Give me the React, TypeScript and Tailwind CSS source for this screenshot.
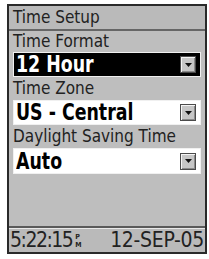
import React from "react";

const font = { fontFamily: '"DejaVu Sans Condensed", "DejaVu Sans", sans-serif' };

function Arrow() {
  return (
    <div className="w-[16px] h-[17px] bg-[#c6c6c6] border border-[#4a4a4a] shadow-[inset_1px_1px_0_#f4f4f4,inset_-1px_-1px_0_#8a8a8a] flex items-center justify-center">
      <svg width="9" height="6" viewBox="0 0 9 6">
        <polygon points="1,1 8,1 4.5,5" fill="#111" />
      </svg>
    </div>
  );
}

function Select({ text, selected, h }: { text: string; selected?: boolean; h: string }) {
  return (
    <div
      className={`${h} flex items-center justify-between pl-[2px] pr-[4px] border ${
        selected ? "bg-black text-white border-[#f0f0f0]" : "bg-white text-black border-[#f0f0f0]"
      }`}
    >
      <span className="inline-block text-[23px] font-bold leading-none origin-left scale-x-[0.84] whitespace-pre" style={font}>
        {text}
      </span>
      <Arrow />
    </div>
  );
}

export default function App() {
  return (
    <div className="w-[209px] h-[259px] bg-white pt-[4px] pl-[7px]">
      <div className="w-[200px] h-[250px] border-2 border-[#2a2a2a] bg-[#bebebe] flex flex-col" style={font}>
        <div className="h-[25px] shrink-0 bg-[#bababa] border-b-2 border-[#666] flex items-center pl-[4px] text-[17px] text-[#222] leading-none">
          Time Setup
        </div>
        <div className="flex-1 flex flex-col px-[4px]">
          <div className="h-[21px] shrink-0 flex items-center text-[17px] text-[#222] leading-none">Time Format</div>
          <Select text="12 Hour" selected h="h-[25px]" />
          <div className="h-[23px] shrink-0 flex items-center text-[17px] text-[#222] leading-none">Time Zone</div>
          <Select text="US - Central" h="h-[25px]" />
          <div className="h-[23px] shrink-0 flex items-center text-[17px] text-[#222] leading-none">Daylight Saving Time</div>
          <Select text="Auto" h="h-[26px]" />
        </div>
        <div className="h-[26px] shrink-0 border-t-2 border-[#5a5a5a] shadow-[inset_0_1px_0_#e8e8e8] bg-[#bababa] flex items-center justify-between pl-[1px] pr-[1px] text-[21px] text-[#222] leading-none">
          <div className="flex items-center">
            <span className="inline-block tracking-[-1.5px]">5:22:15</span>
            <span className="flex flex-col text-[7px] leading-[8px] font-bold ml-[3px] mt-[1px]">
              <span>P</span>
              <span>M</span>
            </span>
          </div>
          <span className="tracking-[-0.3px]">12-SEP-05</span>
        </div>
      </div>
    </div>
  );
}
